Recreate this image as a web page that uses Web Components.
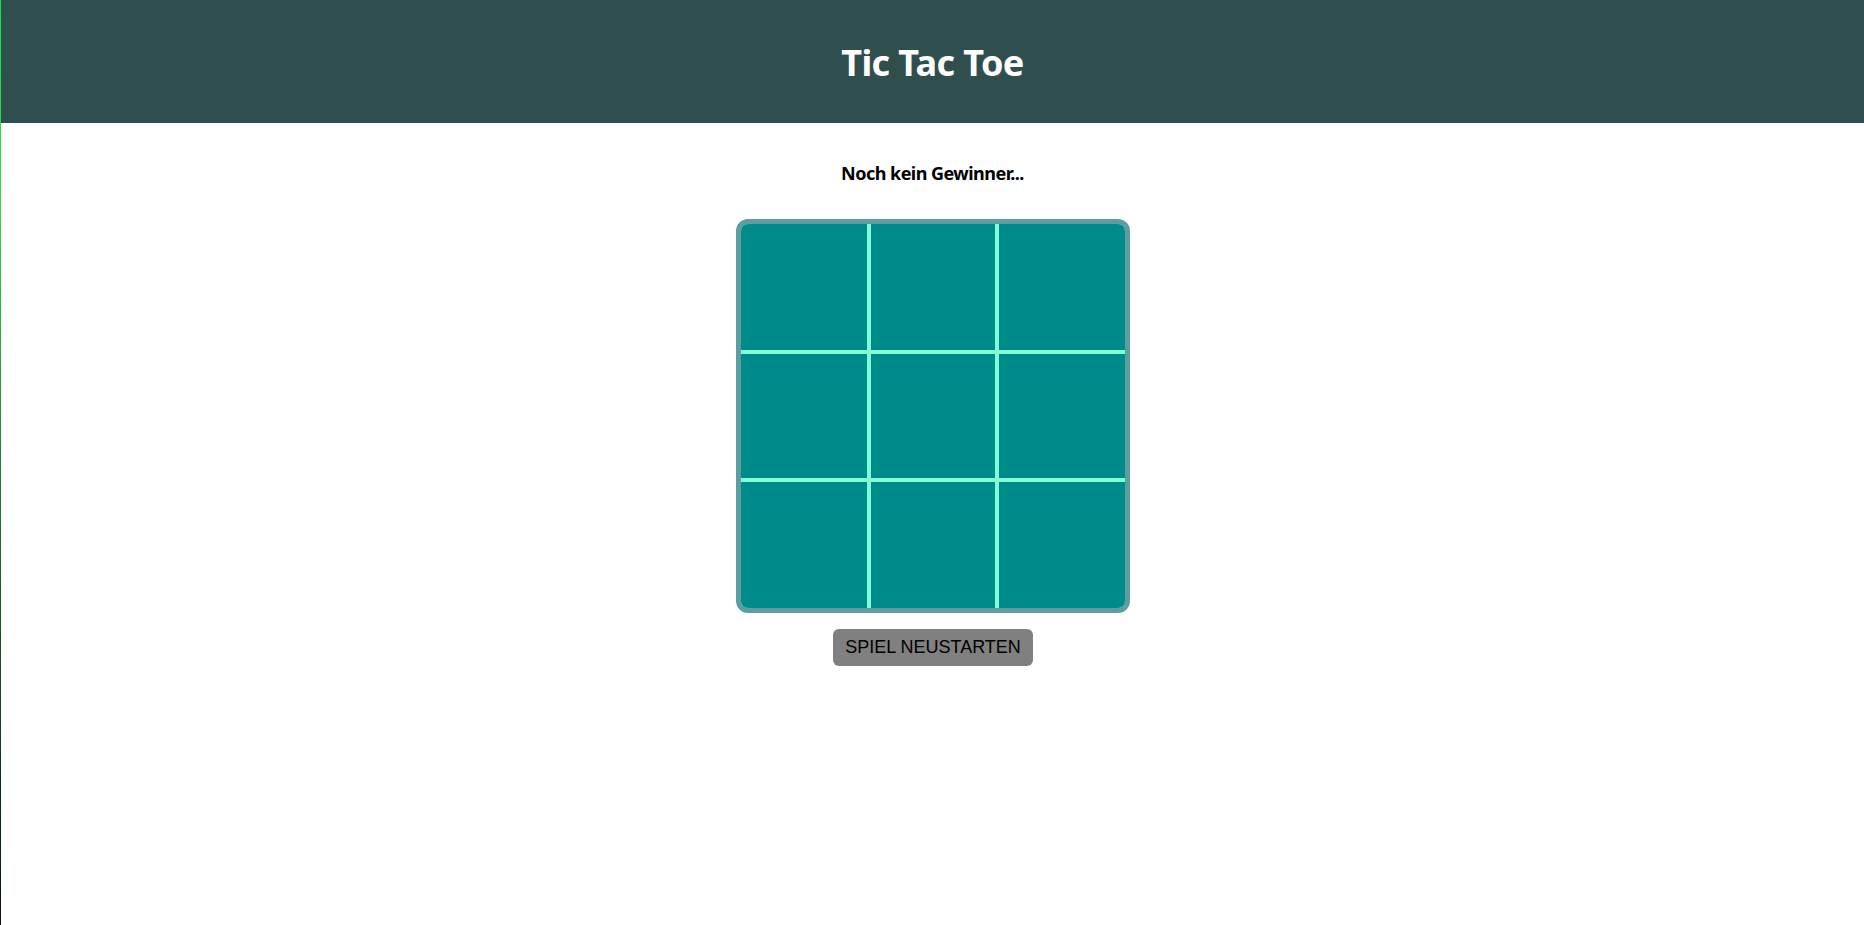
<!DOCTYPE html>
<html lang="de">
<head>
<meta charset="utf-8">
<title>Tic Tac Toe</title>
<style>
  html, body { margin: 0; height: 100%; background: #fff; overflow: hidden; }
</style>
</head>
<body>
<game-page>
  <game-header slot="header">Tic Tac Toe</game-header>
  <game-status>Noch kein Gewinner...</game-status>
  <game-board></game-board>
  <restart-button>SPIEL NEUSTARTEN</restart-button>
</game-page>
<script>
const define = (name, html) => customElements.define(name, class extends HTMLElement {
  constructor() {
    super();
    this.attachShadow({ mode: "open" }).innerHTML = html;
  }
});

define("game-page", `
<style>
  :host { display: flex; height: 100vh; font-family: "Segoe UI", "Noto Sans", "Open Sans", sans-serif; }
  .edge { flex: none; width: 1px; background: linear-gradient(#22dc3c 0%, #2cdd45 22%, #22a238 40%, #1c5a2c 65%, #0d2a16 88%, #05150b 100%); }
  .page { flex: 1; display: flex; flex-direction: column; }
  main { display: flex; flex-direction: column; align-items: center; }
</style>
<div class="edge"></div>
<div class="page"><slot name="header"></slot><main><slot></slot></main></div>`);

define("game-header", `
<style>
  :host { display: flex; box-sizing: border-box; height: 123px; padding-top: 3px; align-items: center; justify-content: center; background: darkslategray; color: #fff; }
  h1 { margin: 0; font-size: 36px; line-height: 48px; font-weight: 700; letter-spacing: -0.6px; white-space: nowrap; }
</style>
<h1><slot></slot></h1>`);

define("game-status", `
<style>
  :host { display: block; height: 96px; color: #000; }
  p { margin: 0; padding-top: 38px; font-size: 18px; line-height: 24px; font-weight: 700; letter-spacing: -0.53px; white-space: nowrap; }
</style>
<p><slot></slot></p>`);

define("game-board", `
<style>
  :host { display: grid; box-sizing: border-box; width: 394px; height: 394px; border: 5px solid cadetblue; border-radius: 12px; overflow: hidden;
    grid-template: 126px 124px 126px / 126px 124px 126px; gap: 4px; background: aquamarine; }
  .cell { background: darkcyan; }
</style>` + `<div class="cell"></div>`.repeat(9));

define("restart-button", `
<style>
  :host { display: block; margin-top: 16px; }
  button { display: flex; align-items: center; justify-content: center; width: 200px; height: 37px; padding: 0 0 0 1px; border: 0; border-radius: 6px; background: gray; color: #000;
    font: 18px/21px "Liberation Sans", Arial, sans-serif; white-space: nowrap; }
</style>
<button><slot></slot></button>`);
</script>
</body>
</html>
